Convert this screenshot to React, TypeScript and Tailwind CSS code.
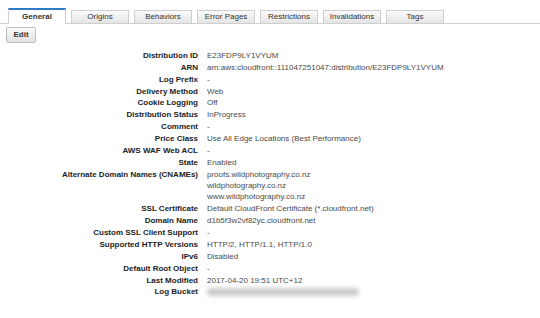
const tabs = ["General", "Origins", "Behaviors", "Error Pages", "Restrictions", "Invalidations", "Tags"]

const rows: [string, string | string[]][] = [
    ["Distribution ID", "E23FDP9LY1VYUM"],
    ["ARN", "arn:aws:cloudfront::111047251047:distribution/E23FDP9LY1VYUM"],
    ["Log Prefix", "-"],
    ["Delivery Method", "Web"],
    ["Cookie Logging", "Off"],
    ["Distribution Status", "InProgress"],
    ["Comment", "-"],
    ["Price Class", "Use All Edge Locations (Best Performance)"],
    ["AWS WAF Web ACL", "-"],
    ["State", "Enabled"],
    ["Alternate Domain Names (CNAMEs)", ["proofs.wildphotography.co.nz", "wildphotography.co.nz", "www.wildphotography.co.nz"]],
    ["SSL Certificate", "Default CloudFront Certificate (*.cloudfront.net)"],
    ["Domain Name", "d1b5f3w2vf82yc.cloudfront.net"],
    ["Custom SSL Client Support", "-"],
    ["Supported HTTP Versions", "HTTP/2, HTTP/1.1, HTTP/1.0"],
    ["IPv6", "Disabled"],
    ["Default Root Object", "-"],
    ["Last Modified", "2017-04-20 19:51 UTC+12"],
]

export default () => {
    return (
        <div className="w-[540px] h-[318px] bg-white overflow-hidden font-['Liberation_Sans',Arial,sans-serif] text-[8px]">
            {/* tab strip */}
            <div className="h-[24px] flex items-end gap-[5px] pl-[8px] border-b border-[#cfcfcf]">
                {tabs.map((t, i) =>
                    i === 0 ? (
                        <div key={t} className="w-[58px] h-[16px] -mb-px bg-white border border-b-0 border-[#cfcfcf] border-t-2 border-t-[#2f7bc4] flex items-center justify-center font-bold text-[#333]">
                            {t}
                        </div>
                    ) : (
                        <div key={t} className="w-[58px] h-[13px] border border-b-0 border-[#cfcfcf] bg-gradient-to-b from-[#fbfbfb] to-[#e4e4e4] flex items-center justify-center text-[#333]">
                            {t}
                        </div>
                    )
                )}
            </div>

            <div className="pl-[6px] pt-[3px]">
                <div className="w-[30px] h-[16px] rounded-[2px] border border-[#bdbdbd] bg-gradient-to-b from-[#fafafa] to-[#e2e2e2] flex items-center justify-center font-bold text-[#333]">
                    Edit
                </div>
            </div>

            <div className="mt-[7px] grid grid-cols-[198px_1fr] gap-x-[9px]">
                {rows.map(([label, value]) => (
                    <div key={label} className="contents">
                        <div className={`text-right font-bold text-[#222] leading-[11.85px] ${Array.isArray(value) ? "pt-[1px]" : ""}`}>
                            {label}
                        </div>
                        {Array.isArray(value) ? (
                            <div className="text-[#4a4a4a] leading-[11px] py-[1px]">
                                {value.map(v => <div key={v}>{v}</div>)}
                            </div>
                        ) : (
                            <div className="text-[#4a4a4a] leading-[11.85px]">{value}</div>
                        )}
                    </div>
                ))}
                <div className="text-right font-bold text-[#222] leading-[11.85px]">Log Bucket</div>
                <div className="h-[12px] flex items-center">
                    <div className="w-[152px] h-[8px] bg-[#cbcbcb] blur-[2px] rounded" />
                </div>
            </div>
        </div>
    )
}
